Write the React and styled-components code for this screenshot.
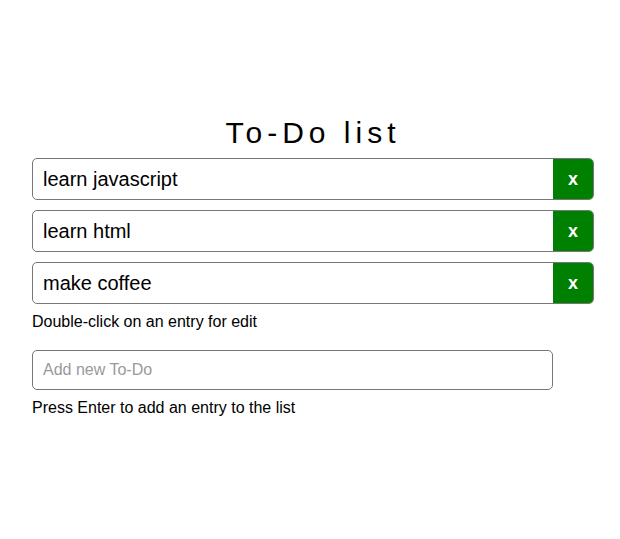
import React from "react"
import styled, { createGlobalStyle } from "styled-components"

const GlobalStyle = createGlobalStyle`
  body {
    margin: 0;
    background: #fff;
    font-family: "Liberation Sans", Arial, sans-serif;
    color: #000;
  }
`

const todos = ["learn javascript", "learn html", "make coffee"]

const App = () => {
  return (
    <Page>
      <GlobalStyle />
      <Title>To-Do list</Title>
      <List>
        {todos.map((t) => (
          <Item key={t}>
            <ItemText>{t}</ItemText>
            <RemoveButton>x</RemoveButton>
          </Item>
        ))}
      </List>
      <Hint $gap={9}>Double-click on an entry for edit</Hint>
      <NewInput placeholder="Add new To-Do" />
      <Hint $gap={9}>Press Enter to add an entry to the list</Hint>
    </Page>
  )
}

export default App

const Page = styled.div`
  width: 562px;
  padding: 115px 0 0 32px;
`

const Title = styled.h1`
  margin: 0 0 7px;
  font-size: 30px;
  font-weight: normal;
  letter-spacing: 5px;
  text-align: center;
  line-height: 36px;
`

const List = styled.div`
  display: flex;
  flex-direction: column;
  gap: 10px;
`

const Item = styled.div`
  display: flex;
  height: 42px;
  box-sizing: border-box;
  border: 1px solid #777;
  border-radius: 5px;
  overflow: hidden;
`

const ItemText = styled.div`
  flex: 1;
  display: flex;
  align-items: center;
  padding-left: 10px;
  font-size: 20px;
`

const RemoveButton = styled.button`
  width: 40px;
  border: none;
  background: #008000;
  color: #fff;
  font-family: "Liberation Sans", Arial, sans-serif;
  font-weight: bold;
  font-size: 18px;
  padding: 0;
`

const Hint = styled.p`
  margin: ${({ $gap }) => $gap}px 0 0;
  font-size: 16px;
  line-height: 18px;
`

const NewInput = styled.input`
  display: block;
  margin-top: 19px;
  width: 521px;
  height: 40px;
  box-sizing: border-box;
  border: 1px solid #777;
  border-radius: 5px;
  padding: 0 10px;
  font-family: "Liberation Sans", Arial, sans-serif;
  font-size: 16px;
  &::placeholder {
    color: #999;
  }
`
